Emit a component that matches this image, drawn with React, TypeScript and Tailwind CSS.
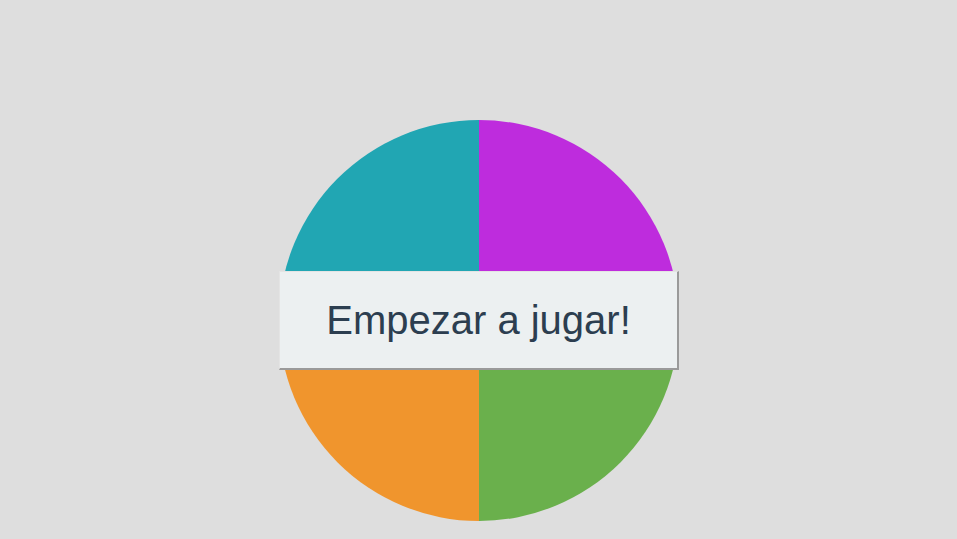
export default function App() {
  return (
    <div className="min-h-[539px] w-full bg-[#dedede] flex justify-center pt-[120px] pl-[1px] font-['Liberation_Sans',Arial,sans-serif]">
      <div className="relative w-[400px] h-[401px]">
        <div className="grid grid-cols-2 grid-rows-2 w-full h-full rounded-full overflow-hidden">
          <div className="bg-[#21a6b3]" />
          <div className="bg-[#be2cdd]" />
          <div className="bg-[#f0952d]" />
          <div className="bg-[#6ab04c]" />
        </div>
        <button className="absolute left-0 top-[151px] w-[400px] h-[99px] bg-[#ecf0f1] border-l border-t border-[#e4e4e4] border-r-2 border-b-2 border-r-[#9a9a9a] border-b-[#9a9a9a] text-[40px] text-[#2c3e50] leading-none">
          Empezar a jugar!
        </button>
      </div>
    </div>
  );
}
